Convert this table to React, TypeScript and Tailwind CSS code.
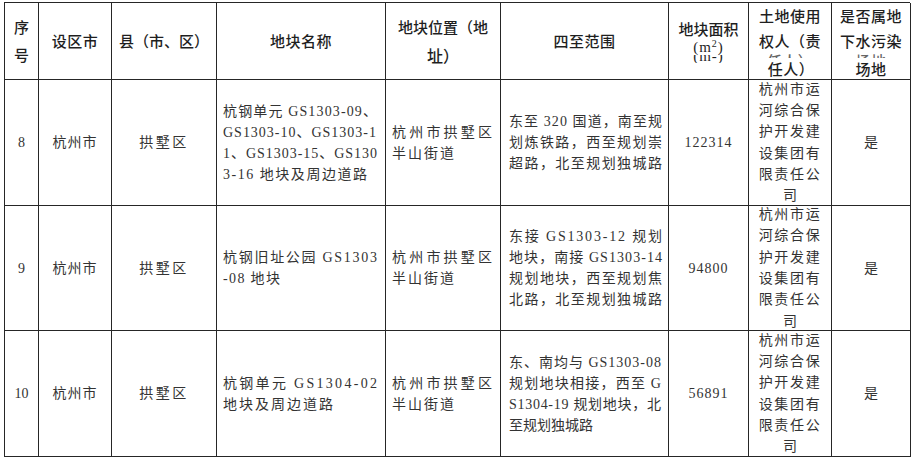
import React, { useLayoutEffect, useRef, useState } from "react";

function FitLine({ text, w }: { text: string; w: number }) {
  const ref = useRef<HTMLSpanElement>(null);
  const [ls, setLs] = useState(0);

  useLayoutEffect(() => {
    const measure = () => {
      const el = ref.current;
      if (!el) return;
      const prev = el.style.letterSpacing;
      el.style.letterSpacing = "0px";
      const natural = el.getBoundingClientRect().width;
      el.style.letterSpacing = prev;
      const n = Array.from(text).length;
      // never squeeze glyphs into each other
      setLs(n > 1 ? Math.max(-0.3, (w - natural) / (n - 1)) : 0);
    };
    measure();
    document.fonts?.ready.then(measure);
  }, [text, w]);

  return (
    <span ref={ref} className="inline-block whitespace-nowrap" style={{ letterSpacing: `${ls}px` }}>
      {text}
    </span>
  );
}

type Line = [string, number];

type Row = {
  no: string;
  name: Line[];
  bounds: Line[];
  area: string;
};

const rows: Row[] = [
  {
    no: "8",
    name: [
      ["杭钢单元 GS1303-09、", 154],
      ["GS1303-10、GS1303-1", 153],
      ["1、GS1303-15、GS130", 154],
      ["3-16 地块及周边道路", 144],
    ],
    bounds: [
      ["东至 320 国道，南至规", 153],
      ["划炼铁路，西至规划崇", 153],
      ["超路，北至规划独城路", 153],
    ],
    area: "122314",
  },
  {
    no: "9",
    name: [
      ["杭钢旧址公园 GS1303", 154],
      ["-08 地块", 57],
    ],
    bounds: [
      ["东接 GS1303-12 规划", 153],
      ["地块，南接 GS1303-14", 153],
      ["规划地块，西至规划焦", 153],
      ["北路，北至规划独城路", 153],
    ],
    area: "94800",
  },
  {
    no: "10",
    name: [
      ["杭钢单元 GS1304-02", 154],
      ["地块及周边道路", 110],
    ],
    bounds: [
      ["东、南均与 GS1303-08", 152],
      ["规划地块相接，西至 G", 152],
      ["S1304-19 规划地块，北", 152],
      ["至规划独城路", 84],
    ],
    area: "56891",
  },
];

const owner = ["杭州市运", "河综合保", "护开发建", "设集团有", "限责任公", "司"];
const location: Line[] = [
  ["杭州市拱墅区", 100],
  ["半山街道", 62],
];

const cellBase = "border-r-[1.5px] border-b-[1.5px] border-[#262626] flex items-center";
const headBase =
  "border-r-[1.5px] border-b-[1.5px] border-[#262626] flex justify-center overflow-hidden font-['Noto_Sans_CJK_SC',sans-serif] text-[15px] font-medium text-[#1f1f1f]";

function Lines({ lines }: { lines: Line[] }) {
  return (
    <div className="flex flex-col items-start leading-[21px]">
      {lines.map(([t, w], i) => (
        <FitLine key={i} text={t} w={w} />
      ))}
    </div>
  );
}

export default function App() {
  return (
    <div className="w-[916px] h-[462px] bg-white pt-[2px] pl-[4px]">
      <div className="grid grid-cols-[34px_73px_105px_169px_115px_168px_80px_83px_79px] grid-rows-[77px_126px_125px_126px] w-[906px] border-l-[1.5px] border-t-[1.5px] border-[#262626] font-['Liberation_Serif','Noto_Sans_CJK_SC',serif] text-[14px] text-[#333]">
        {/* Header */}
        <div className={`${headBase} items-center`}>
          <div className="flex flex-col items-center leading-[28px]">
            <span>序</span>
            <span>号</span>
          </div>
        </div>
        <div className={`${headBase} items-center tracking-[0.5px]`}>设区市</div>
        <div className={`${headBase} items-center`}>县（市、区）</div>
        <div className={`${headBase} items-center tracking-[0.5px]`}>地块名称</div>
        <div className={`${headBase} items-center`}>
          <div className="flex flex-col items-center leading-[29px]">
            <span>地块位置（地</span>
            <span className="text-[16px]">址）</span>
          </div>
        </div>
        <div className={`${headBase} items-center tracking-[0.5px]`}>四至范围</div>
        <div className={`${headBase} items-start`}>
          <div className="flex flex-col items-center pt-[16px]">
            <span className="leading-[20px]">地块面积</span>
            <span className="leading-[16px] font-['Liberation_Serif',serif] font-normal text-[15px] tracking-[1px]">
              (m<sup className="text-[10px]">2</sup>)
            </span>
            <div className="h-[8px] overflow-hidden font-['Liberation_Serif',serif] font-normal text-[15px] tracking-[1px]">
              <div className="leading-[16px] -mt-[7px]">(m-)</div>
            </div>
          </div>
        </div>
        <div className={`${headBase} items-start`}>
          <div className="flex flex-col items-center leading-[25px] tracking-[0.5px]">
            <span>土地使用</span>
            <span>权人（责</span>
            <span className="h-[5px] overflow-hidden leading-[15px] text-[#666]">任人）</span>
            <span className="leading-[22px] pl-[2px]">任人）</span>
          </div>
        </div>
        <div className={`${headBase} items-start`}>
          <div className="flex flex-col items-center leading-[25px] tracking-[0.5px]">
            <span>是否属地</span>
            <span>下水污染</span>
            <span className="h-[5px] overflow-hidden leading-[15px] text-[#666]">场地</span>
            <span className="leading-[22px]">场地</span>
          </div>
        </div>

        {/* Body rows */}
        {rows.map((r) => (
          <React.Fragment key={r.no}>
            <div className={`${cellBase} justify-center text-[14px]`}>{r.no}</div>
            <div className={`${cellBase} justify-center`}>
              <FitLine text="杭州市" w={44} />
            </div>
            <div className={`${cellBase} justify-center`}>
              <FitLine text="拱墅区" w={47} />
            </div>
            <div className={`${cellBase} pl-[6px]`}>
              <Lines lines={r.name} />
            </div>
            <div className={`${cellBase} pl-[6px]`}>
              <Lines lines={location} />
            </div>
            <div className={`${cellBase} pl-[8px]`}>
              <Lines lines={r.bounds} />
            </div>
            <div className={`${cellBase} justify-center text-[14px] tracking-[1px]`}>{r.area}</div>
            <div className={`${cellBase} justify-center`}>
              <div className="flex flex-col items-center leading-[21.3px]">
                {owner.map((l) => (
                  <FitLine key={l} text={l} w={l.length > 1 ? 61 : 14} />
                ))}
              </div>
            </div>
            <div className={`${cellBase} justify-center text-[14px]`}>是</div>
          </React.Fragment>
        ))}
      </div>
    </div>
  );
}
